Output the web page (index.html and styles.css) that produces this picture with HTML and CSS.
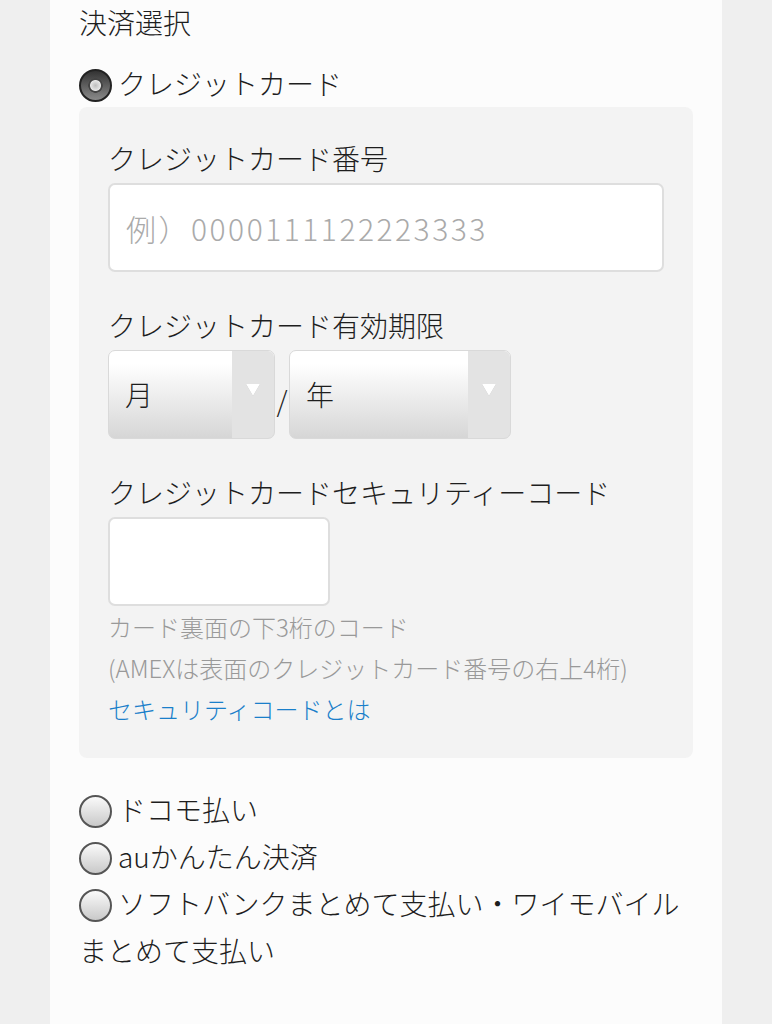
FILE: index.html
```html
<!DOCTYPE html>
<html lang="ja">
<head>
    <meta charset="UTF-8">
    <meta name="viewport" content="width=device-width, initial-scale=1.0">
    <title>決済選択</title>
    <link rel="stylesheet" href="styles.css">
</head>
<body>
    <div class="page">
        <h2 class="section-title">決済選択</h2>

        <label class="pay-option first">
            <input type="radio" name="payment" value="credit" checked>クレジットカード
        </label>

        <div class="card-panel">
            <div class="field">
                <div class="field-label">クレジットカード番号</div>
                <input type="text" class="text-input card-number" placeholder="例）0000111122223333">
            </div>

            <div class="field">
                <div class="field-label">クレジットカード有効期限</div>
                <div class="expire-row">
                    <div class="select-box month">
                        <span class="select-value">月</span>
                        <span class="select-arrow"></span>
                    </div>
                    <span class="slash">/</span>
                    <div class="select-box year">
                        <span class="select-value">年</span>
                        <span class="select-arrow"></span>
                    </div>
                </div>
            </div>

            <div class="field last">
                <div class="field-label">クレジットカードセキュリティーコード</div>
                <input type="text" class="text-input security-code">
                <p class="help-text">カード裏面の下3桁のコード<br>(AMEXは表面のクレジットカード番号の右上4桁)</p>
                <a href="#" class="help-link">セキュリティコードとは</a>
            </div>
        </div>

        <div class="other-options">
            <label class="pay-option">
                <input type="radio" name="payment" value="docomo">ドコモ払い
            </label>
            <label class="pay-option">
                <input type="radio" name="payment" value="au">auかんたん決済
            </label>
            <label class="pay-option">
                <input type="radio" name="payment" value="softbank">ソフトバンクまとめて支払い・ワイモバイルまとめて支払い
            </label>
        </div>
    </div>
</body>
</html>
```

FILE: styles.css
```css
/* 決済選択フォーム */
body {
    margin: 0;
    background-color: #efefef;
    color: #1e1e1e;
    font-family: "Noto Sans CJK JP", "Noto Sans", sans-serif;
    font-weight: 300;
}

.page {
    width: 672px;
    min-height: 100vh;
    margin: 0 auto;
    padding: 0 29px;
    box-sizing: border-box;
    background-color: #fcfcfc;
}

.section-title {
    margin: 0;
    font-size: 28px;
    font-weight: 300;
    line-height: 44px;
}

.pay-option {
    display: block;
    font-size: 28px;
    line-height: 47px;
}

.pay-option.first {
    margin-top: 16px;
}

.pay-option input {
    -webkit-appearance: none;
    appearance: none;
    width: 33px;
    height: 33px;
    margin: 0 6px 0 0;
    vertical-align: -7px;
    border: 2px solid #555;
    border-radius: 50%;
    box-sizing: border-box;
    background: linear-gradient(#fafafa, #c9c9c9);
}

.pay-option input:checked {
    border-color: #222;
    background:
        radial-gradient(circle, #bdbdbd 0, #e6e6e6 5px, #444 6px, #444 7px, transparent 7.5px),
        linear-gradient(#333, #8a8a8a);
}

/* クレジットカード入力欄 */
.card-panel {
    padding: 31px 29px 29px;
    background-color: #f3f3f3;
    border-radius: 8px;
}

.field {
    margin-bottom: 33px;
}

.field.last {
    margin-bottom: 0;
}

.field-label {
    font-size: 28px;
    line-height: 40px;
    margin-bottom: 5px;
}

.text-input {
    display: block;
    height: 89px;
    padding: 0 16px;
    border: 2px solid #dedede;
    border-radius: 7px;
    box-sizing: border-box;
    background-color: #fff;
    font-family: inherit;
    font-weight: 300;
    font-size: 30px;
    color: #222;
}

.text-input::placeholder {
    color: #aaa;
    letter-spacing: 2.5px;
}

.card-number {
    width: 556px;
}

.security-code {
    width: 222px;
}

.expire-row {
    display: flex;
    align-items: center;
}

.select-box {
    display: flex;
    height: 89px;
    border: 1px solid #d9d9d9;
    border-radius: 7px;
    box-sizing: border-box;
    overflow: hidden;
    background: linear-gradient(#fff 15%, #d6d6d6);
}

.select-box.month {
    width: 167px;
}

.select-box.year {
    width: 222px;
}

.select-value {
    flex: 1;
    padding-left: 16px;
    font-size: 28px;
    line-height: 87px;
}

.select-arrow {
    position: relative;
    width: 42px;
    background-color: #e3e3e3;
}

.select-arrow::after {
    content: "";
    position: absolute;
    top: 33px;
    left: 14px;
    border-left: 7px solid transparent;
    border-right: 7px solid transparent;
    border-top: 12px solid #fff;
    filter: drop-shadow(0 0 0.5px #aaa);
}

.slash {
    width: 14px;
    text-align: center;
    font-size: 28px;
    line-height: 40px;
    padding-top: 10px;
}

.help-text {
    margin: 0;
    font-size: 24px;
    line-height: 41px;
    color: #999;
}

.help-link {
    display: block;
    font-size: 24px;
    line-height: 41px;
    color: #1a7fca;
    text-decoration: none;
}

.other-options {
    margin-top: 28px;
}
```
